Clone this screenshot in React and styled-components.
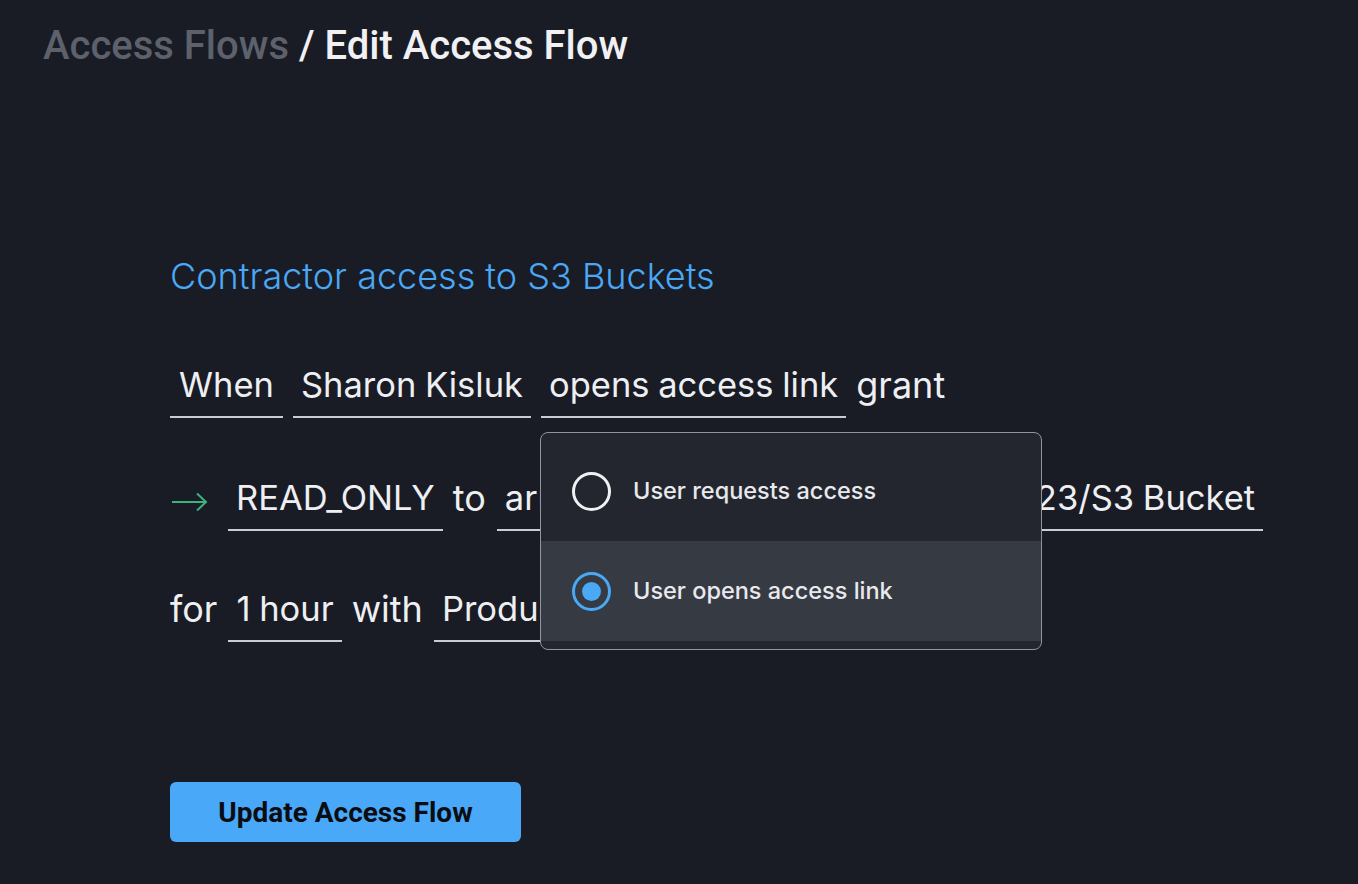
import React from "react";
import styled, { createGlobalStyle } from "styled-components";

const Global = createGlobalStyle`
  html, body { margin: 0; padding: 0; background: #191c25; }
  body { font-family: Inter, "Noto Sans", sans-serif; color: #eeeff2; }
  * { box-sizing: border-box; }
`;

const Page = styled.div`
  min-height: 884px;
  padding: 22px 43px 0;
  background: #191c25;
`;

const Breadcrumb = styled.h1`
  margin: 0;
  font-family: Roboto, "Liberation Sans", sans-serif;
  font-weight: 500;
  font-size: 40px;
  line-height: 47px;
  color: #f1f1f3;
`;

const Crumb = styled.span`
  color: #5d616b;
`;

const Content = styled.div`
  margin: 185px 0 0 127px;
  display: flex;
  flex-direction: column;
`;

const FlowName = styled.h2`
  margin: 0;
  font-weight: 300;
  font-size: 36px;
  line-height: 44px;
  color: #4aa8f5;
`;

const Sentence = styled.div`
  margin-top: ${(p) => p.$top}px;
  display: flex;
  align-items: flex-end;
  gap: 10px;
`;

const Word = styled.span`
  font-size: 36px;
  line-height: 42px;
  font-weight: 400;
  color: #eeeff2;
  padding: 0 1px 12px 0;
`;

const Field = styled.span`
  position: relative;
  font-size: 34.5px;
  line-height: 42px;
  font-weight: 400;
  word-spacing: -1px;
  color: #eeeff2;
  padding: 0 ${(p) => p.$pad ?? 8}px 10px;
  border-bottom: 2px solid #c9ccd5;
  white-space: nowrap;
`;

const Arrow = styled.svg`
  width: 36px;
  height: 20px;
  margin: 0 10px 19px 2px;
  flex: none;
`;

const Menu = styled.div`
  position: absolute;
  top: calc(100% + 16px);
  left: -1px;
  width: 502px;
  padding: 8px 0 8px;
  background: #23262e;
  border: 1.5px solid #8f95a0;
  border-radius: 8px;
  z-index: 10;
  overflow: hidden;
  word-spacing: normal;
`;

const Option = styled.div`
  height: 100px;
  display: flex;
  align-items: center;
  gap: 22px;
  padding-left: 31px;
  background: ${(p) => (p.$active ? "#363a43" : "transparent")};
`;

const Radio = styled.span`
  width: 39px;
  height: 39px;
  border-radius: 50%;
  border: 3.5px solid ${(p) => (p.$checked ? "#4aa8f5" : "#f1f1f3")};
  display: flex;
  align-items: center;
  justify-content: center;
  flex: none;
  &::after {
    content: "";
    display: ${(p) => (p.$checked ? "block" : "none")};
    width: 19px;
    height: 19px;
    border-radius: 50%;
    background: #4aa8f5;
  }
`;

const OptionLabel = styled.span`
  font-size: 23.5px;
  line-height: 30px;
  font-weight: 500;
  color: #e8e9ec;
`;

const Button = styled.button`
  margin-top: 140px;
  align-self: flex-start;
  width: 351px;
  height: 60px;
  border: none;
  border-radius: 6px;
  background: #4aa8f8;
  color: #0b0d12;
  font-family: Roboto, "Liberation Sans", sans-serif;
  font-weight: 700;
  font-size: 28px;
  cursor: pointer;
`;

export default function App() {
  return (
    <>
      <Global />
      <Page>
        <Breadcrumb>
          <Crumb>Access Flows</Crumb> / Edit Access Flow
        </Breadcrumb>
        <Content>
          <FlowName>Contractor access to S3 Buckets</FlowName>
          <Sentence $top={66}>
            <Field $pad={9}>When</Field>
            <Field>Sharon Kisluk</Field>
            <Field>
              opens access link
              <Menu>
                <Option>
                  <Radio />
                  <OptionLabel>User requests access</OptionLabel>
                </Option>
                <Option $active>
                  <Radio $checked />
                  <OptionLabel>User opens access link</OptionLabel>
                </Option>
              </Menu>
            </Field>
            <Word>grant</Word>
          </Sentence>
          <Sentence $top={59}>
            <Arrow viewBox="0 0 36 20" fill="none">
              <path d="M0 10 H34 M25 1.5 L34 10 L25 18.5" stroke="#3db37c" strokeWidth="2" />
            </Arrow>
            <Field>READ_ONLY</Field>
            <Word>to</Word>
            <Field>arn:aws:s3:::contractor_docs_2023/S3 Bucket</Field>
          </Sentence>
          <Sentence $top={57}>
            <Word>for</Word>
            <Field>1 hour</Field>
            <Word>with</Word>
            <Field>Production Approvers</Field>
          </Sentence>
          <Button>Update Access Flow</Button>
        </Content>
      </Page>
    </>
  );
}
